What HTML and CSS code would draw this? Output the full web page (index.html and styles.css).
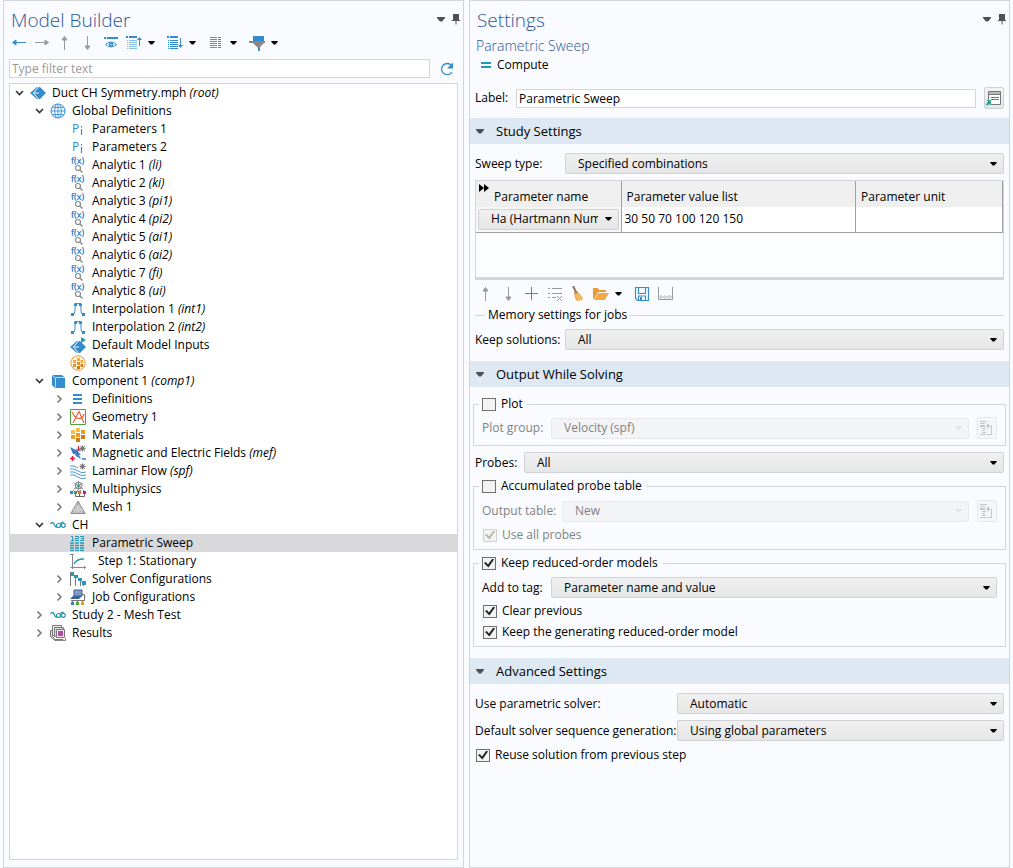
FILE: index.html
```html
<!DOCTYPE html>
<html lang="en">
<head>
<meta charset="utf-8">
<title>Model Builder</title>
<meta name="viewport" content="width=device-width, initial-scale=1">
<link rel="stylesheet" href="styles.css">
</head>
<body>
<svg class="sprite" aria-hidden="true">
  <symbol id="caret" viewBox="0 0 8 5"><path d="M0 0h8v1L5 4.500H3L0 1z"/></symbol>
  <symbol id="pin" viewBox="0 0 8 11"><path d="M1 0h6v6h1v1H4.500v3.500h-1V7H0V6h1z"/></symbol>
  <symbol id="open" viewBox="0 0 10 10"><path d="M1 3L4.500 6.500 8 3" fill="none" stroke="#333" stroke-width="1.600"/></symbol>
  <symbol id="closed" viewBox="0 0 10 10"><path d="M2.500 1.500L6 5 2.500 8.500" fill="none" stroke="#777" stroke-width="1.500"/></symbol>
  <symbol id="left" viewBox="0 0 16 16"><path d="M2 7.500h13M5 5v5L1.500 7.500z" fill="#338ccd" stroke="#338ccd"/></symbol>
  <symbol id="right" viewBox="0 0 16 16"><path d="M1 7.500h13M11 5v5l3.500-2.500z" fill="#999" stroke="#999"/></symbol>
  <symbol id="up" viewBox="0 0 16 16"><path d="M7.500 2v13M5 5h5L7.500 1.500z" fill="#999" stroke="#999"/></symbol>
  <symbol id="down" viewBox="0 0 16 16"><path d="M7.500 1v13M5 11h5l-2.500 3.500z" fill="#999" stroke="#999"/></symbol>
  <symbol id="show" viewBox="0 0 16 16"><path d="M1 3h2M4 3h11" stroke="#338ccd" stroke-width="2"/><path d="M2.500 9.500Q8 4.500 13.500 9.500Q8 14.500 2.500 9.500z" fill="none" stroke="#338ccd"/><circle cx="8" cy="9.500" r="2.300" fill="#338ccd"/><circle cx="8" cy="9.500" r=".7" fill="#fff"/></symbol>
  <symbol id="collapse" viewBox="0 0 16 16"><path d="M0 2h2M3 2h8" stroke="#338ccd" stroke-width="2"/><path d="M1 5.500h1M3 5.500h8M1 7.500h1M3 7.500h8M1 9.500h1M3 9.500h8M1 11.500h1M3 11.500h8M1 13.500h1M3 13.500h8" stroke="#8abfe5"/><path d="M13.500 4v7" stroke="#338ccd"/><path d="M11 5l2.500-3L16 5z" fill="#338ccd"/></symbol>
  <symbol id="expand" viewBox="0 0 16 16"><path d="M0 2h2M3 2h8" stroke="#338ccd" stroke-width="2"/><path d="M1 5.500h1M3 5.500h8M1 7.500h1M3 7.500h8M1 9.500h1M3 9.500h8M1 11.500h1M3 11.500h8M1 13.500h1M3 13.500h8" stroke="#338ccd"/><path d="M13.500 3v8" stroke="#338ccd"/><path d="M11 10l2.500 3 2.500-3z" fill="#338ccd"/></symbol>
  <symbol id="columns" viewBox="0 0 16 16"><path d="M2 2.500h7M2 4.500h7M2 6.500h7M2 8.500h7M2 10.500h7M2 12.500h7" stroke="#888"/><path d="M10 2.500h3M10 4.500h3M10 6.500h3M10 8.500h3M10 10.500h3M10 12.500h3" stroke="#338ccd"/></symbol>
  <symbol id="filter" viewBox="0 0 16 16"><path d="M4 1h11v5H4z" fill="#338ccd"/><path d="M0 6h16v2h-1l-4 4H8L4 8H0z" fill="#888"/><path d="M9 12h2v4H9z" fill="#338ccd"/></symbol>
  <symbol id="refresh" viewBox="0 0 16 16"><path d="M12.500 4.500A5.600 5.600 0 1 0 13 11" fill="none" stroke="#338ccd" stroke-width="1.300"/><path d="M14 1.500v6H8z" fill="#338ccd"/></symbol>
  <symbol id="root" viewBox="0 0 16 16"><path d="M0 8l7-6h3l6 6-6 6H7z" fill="#338ccd"/><path d="M8.500 2L3.500 8l5 6M3.500 8H9" fill="none" stroke="#fff" stroke-width=".9"/></symbol>
  <symbol id="globe" viewBox="0 0 16 16"><circle cx="8" cy="8" r="7" fill="#f0f7fd" stroke="#338ccd"/><path d="M8 1v14M1 8h14M2.500 4.500h11M2.500 11.500h11M6 1.500Q3 8 6 14.500M10 1.500Q13 8 10 14.500" fill="none" stroke="#338ccd" stroke-width=".8"/></symbol>
  <symbol id="param" viewBox="0 0 16 16"><text x="2" y="12" font-size="12" fill="#338ccd">P</text><path d="M11.500 8v6M11.500 5v1.500" stroke="#338ccd" stroke-width="1.200"/></symbol>
  <symbol id="fx" viewBox="0 0 16 16"><text x="1" y="7" font-size="9" fill="#1272bd" stroke="#1272bd" stroke-width=".2">f(x)</text><circle cx="8" cy="11" r="2.500" fill="#fff" stroke="#888" stroke-width="1.200"/><path d="M10 13l2.500 2.500" stroke="#888" stroke-width="1.400"/></symbol>
  <symbol id="interp" viewBox="0 0 16 16"><path d="M2 13.500h1Q5 13.500 5 9.500V6Q5 2.500 8 2.500T11 6v3.500Q11 13.500 13 13.500h1" fill="none" stroke="#338ccd"/><path d="M1 12h3v3H1zM5 2h2v3H4V3zM9 2h2l1 1v2H9zM12 12h3v3h-3z" fill="#338ccd"/></symbol>
  <symbol id="inputs" viewBox="0 0 16 16"><path d="M0 10l7-6h3l6 6-6 6H7z" fill="#338ccd"/><path d="M8.500 4l-5 6 5 6M3.500 10H9" fill="none" stroke="#fff" stroke-width=".9"/><path d="M11 0l5 3-5 3z" fill="#1f9fa8"/></symbol>
  <symbol id="matglobe" viewBox="0 0 16 16"><circle cx="8" cy="8" r="7.200" fill="#fff8ee" stroke="#f0962c"/><path d="M3 5h3v3H3zM7 3h3v3H7zM10.500 5h2.500v3h-2.500z" fill="#f5a83a"/><path d="M3 9h3v3H3zM7 7h3v3H7z" fill="#ef8f1f"/><path d="M7 11h3v3H7zM10.500 9h2.500v3h-2.500z" fill="#cf7715"/></symbol>
  <symbol id="cube" viewBox="0 0 16 16"><path d="M2 2h10l3 3v10H5l-3-3z" fill="#338ccd"/><path d="M2 2l3.500 3v9.500M5.500 4.500H15" fill="none" stroke="#cfe6f6" stroke-width=".9"/></symbol>
  <symbol id="defs" viewBox="0 0 16 16"><path d="M3 4h9M3 8h9M3 12h9" stroke="#338ccd" stroke-width="2"/></symbol>
  <symbol id="geom" viewBox="0 0 16 16"><path d="M.5.500h15v15H.5z" fill="#fff" stroke="#4aa33d"/><path d="M3 14L9 2.500 14 14M2 3q3 6.500 7 6.500T14 5" fill="none" stroke="#ea6442" stroke-width="1.200"/></symbol>
  <symbol id="mat" viewBox="0 0 16 16"><path d="M1 3h4v4H1zM6 1h4v4H6z" fill="#f9bd42"/><path d="M11 3h4v4h-4zM1 8h4v4H1zM6 6h4v4H6z" fill="#f39c1f"/><path d="M6 11h4v4H6zM11 8h4v4h-4z" fill="#d27b17"/></symbol>
  <symbol id="gear" viewBox="0 0 8 8"><path d="M4 .5v7M.5 4h7M1.500 1.500l5 5M6.500 1.500l-5 5" stroke="#777" stroke-width="1.200"/><circle cx="4" cy="4" r="1.300" fill="#777"/></symbol>
  <symbol id="mef" viewBox="0 0 16 16"><path d="M0 2l6 3 1-2 2 5 2 1-2 1 2 4-5-3-1-2-2 0z" fill="#3b7fc0"/><path d="M8.500 1v4h2" fill="none" stroke="#d11f48" stroke-width="1.300"/><path d="M0 13.500h5M2.500 11v5" stroke="#d11f48" stroke-width="1.500"/><path d="M12 14h4" stroke="#3b7fc0" stroke-width="1.500"/><use href="#gear" x="9" y="0" width="7" height="7"/></symbol>
  <symbol id="flow" viewBox="0 0 16 16"><path d="M0 3q4-1 8 2M0 6q4-1 8 2t8 1M0 9q4-1 8 2t8 1M0 12q4-1 8 2t8 1" fill="none" stroke="#4a9bd3"/><use href="#gear" x="9" y="0" width="7" height="7"/></symbol>
  <symbol id="multi" viewBox="0 0 16 16"><circle cx="8.500" cy="4.500" r="3.500" fill="#dbe7e6" stroke="#888"/><path d="M4 2l9 6M13 2L4 8M8.500 0v9" stroke="#888"/><circle cx="8.500" cy="4.500" r="1.200" fill="#24a38e"/><path d="M4 9l-2 2M8 9l-1 2M10 9l1 2M13 9l2 2" stroke="#777"/><path d="M0 10h3v3H0z" fill="#3b7fc0"/><path d="M4 10h3v3H4z" fill="#40a044"/><path d="M8 10h3v3H8z" fill="#e8663c"/><path d="M13 10h3v3h-3z" fill="#d8128d"/><path d="M5.500 13v2.500h9V13M9.500 13v2.500" fill="none" stroke="#666"/></symbol>
  <symbol id="mesh" viewBox="0 0 16 16"><path d="M8 2L.8 14.500h14.400z" fill="#bbb" stroke="#8a8a8a"/><path d="M5.500 6.500L8 8l2.500-1.500M3 11l5-3 5 3M8 8v3l-3 3.500M8 11l3 3.500M3 11h10" fill="none" stroke="#e4e4e4" stroke-width=".6"/></symbol>
  <symbol id="study" viewBox="0 0 16 16"><path d="M.5 7Q2.500 4 4 7q1.500 4 3.500 3" fill="none" stroke="#2399b6" stroke-width="1.300"/><circle cx="8.500" cy="8.500" r="2" fill="none" stroke="#2399b6" stroke-width="1.200"/><path d="M10 7q2-3 3.500-1" fill="none" stroke="#2399b6" stroke-width="1.200"/><circle cx="13.300" cy="8.300" r="2" fill="none" stroke="#2399b6" stroke-width="1.200"/></symbol>
  <symbol id="sweep" viewBox="0 0 16 16"><path d="M1 1.500h1.500v4M1 5.500h3M5 1.500h3.500v2h-3v2H9M10 1.500h3.500v4H10M11 3.500h2" fill="none" stroke="#2399b6"/><path d="M0 8h4M5 8h4M10 8h4M0 10.500h4M5 10.500h4M10 10.500h4M0 13h4M5 13h4M10 13h4M0 15.500h4M5 15.500h4M10 15.500h4" stroke="#2399b6" stroke-width="1.500"/></symbol>
  <symbol id="step" viewBox="0 0 16 16"><path d="M2.500 1v13.500H16M0 1.500h4M14.500 13v3M.5 14.500H2M2.500 14v2" fill="none" stroke="#888"/><path d="M4 11q2-5 10-5" fill="none" stroke="#2399b6" stroke-width="1.300"/></symbol>
  <symbol id="solver" viewBox="0 0 16 16"><path d="M.5 1v14M5.500 6v9M10.500 9v6M13.500 11v4" stroke="#777"/><path d="M1 1h3v4H1zM4 4h4v3H4zM8 7h4v3H8zM12 10h4v4h-4z" fill="#2399b6"/></symbol>
  <symbol id="job" viewBox="0 0 16 16"><path d="M4 1h8v6H4z" fill="#7f9fca" stroke="#3e5f93"/><path d="M3 7h9l-3 3H0z" fill="#3e6298"/><path d="M12 5.500h2.500V11M1 11.500h14M2.500 11v2M7.500 11v2M12.500 11v2" fill="none" stroke="#777"/><path d="M1 13h3v3H1z" fill="#3b7fc0"/><path d="M6 13h3v3H6z" fill="#55a733"/><path d="M11 13h3v3h-3z" fill="#f09a1d"/></symbol>
  <symbol id="results" viewBox="0 0 16 16"><path d="M2.500.500h9v10h-9z" fill="#eee" stroke="#777"/><path d="M.5 5.500h2v6L5 14.500h8v1H5l-4.500-4z" fill="#ddd" stroke="#777"/><path d="M4.500 2.500h9v9h-9z" fill="#ddd" stroke="#777"/><path d="M6.500 4.500h8v8h-8z" fill="#f4e6f2" stroke="#777"/><path d="M8 6h5v5H8z" fill="#b44a9c"/><path d="M6 15.500h9.500V13" fill="none" stroke="#888"/></symbol>
  <symbol id="compute" viewBox="0 0 10 6"><path d="M0 1h10M0 5h10" stroke="#2399b6" stroke-width="2"/></symbol>
  <symbol id="goto" viewBox="0 0 16 16"><path d="M2.500 1.500h12v13h-12z" fill="#fff" stroke="#777"/><path d="M3 2h11v2H3z" fill="#bbb"/><path d="M2 4.500h13" stroke="#777"/><path d="M5 7.500h8M5 9.500h8" stroke="#16a390"/><path d="M0 10h5v5H4l-1-1-2 2-1-1v-1l2-2z" fill="#16a390" stroke="#fff" stroke-width=".3"/></symbol>
  <symbol id="plus" viewBox="0 0 16 16"><path d="M1 7.500h13M7.500 1v13" stroke="#338ccd"/></symbol>
  <symbol id="clear" viewBox="0 0 16 16"><path d="M1 2.500h2M5 2.500h10M1 7.500h2M5 7.500h10M1 11.500h2M5 11.500h4" stroke="#999"/><path d="M10 10l5 5M15 10l-5 5" stroke="#999"/></symbol>
  <symbol id="broom" viewBox="0 0 16 16"><path d="M3 0l4 8" stroke="#8a7960" stroke-width="2"/><path d="M4 7l4-1 5 6-1 2-5 1-2-3z" fill="#f2a947"/><path d="M4 7l4-1" stroke="#b77b28"/><path d="M6 9l3 5M8 8l3 5" stroke="#f9cf8e"/></symbol>
  <symbol id="folder" viewBox="0 0 16 16"><path d="M0 2h5l1 2h7v2H5L1 13H0z" fill="#eb9a33"/><path d="M5 7h11l-4 7H1z" fill="#f2a947"/></symbol>
  <symbol id="disk" viewBox="0 0 16 16"><path d="M1.500 1.500h13v13h-11l-2-2zM4.500 1.500v6h7v-6M4.500 14v-4h7v4" fill="none" stroke="#338ccd" stroke-width="1.200"/><path d="M6 11h2v3H6z" fill="#338ccd"/></symbol>
  <symbol id="range" viewBox="0 0 16 16"><path d="M1.500 1v12.500h14V1" fill="none" stroke="#999"/><path d="M2 11.500l2-2 2 2 2-2 2 2 2-2 3 2M4 11v2M8 11v2M12 11v2" fill="none" stroke="#999" stroke-width=".8"/></symbol>
  <symbol id="source" viewBox="0 0 16 16"><path d="M1 1.500h7M1 3.500h5M3 8.500h4M3 10.500h3M3 12.500h4M1 14.500h6" stroke="#c4c6ca"/><path d="M1 6h5" stroke="#c4c6ca" stroke-width="2"/><path d="M8 6h4.500v8.500H8" fill="none" stroke="#c4c6ca"/><path d="M10 3v6L7 6z" fill="#c4c6ca"/></symbol>
  <symbol id="expander" viewBox="0 0 10 8"><path d="M0 0v8l5-4zM5 0v8l5-4z"/></symbol>
</svg>

<main class="app">
  <section class="panel builder">
    <header class="panel-head">
      <h1 class="title">Model Builder</h1>
      <div class="window-tools">
        <button class="bare" aria-label="Panel menu"><svg class="caret dim"><use href="#caret"/></svg></button>
        <button class="bare" aria-label="Pin"><svg class="pin dim"><use href="#pin"/></svg></button>
      </div>
    </header>
    <div class="toolbar">
      <button class="bare" aria-label="Previous node"><svg class="icon"><use href="#left"/></svg></button>
      <button class="bare" aria-label="Next node"><svg class="icon"><use href="#right"/></svg></button>
      <button class="bare" aria-label="Move up"><svg class="icon"><use href="#up"/></svg></button>
      <button class="bare" aria-label="Move down"><svg class="icon"><use href="#down"/></svg></button>
      <button class="bare" aria-label="Show"><svg class="icon"><use href="#show"/></svg></button>
      <button class="bare drop" aria-label="Collapse all"><svg class="icon"><use href="#collapse"/></svg><svg class="caret small"><use href="#caret"/></svg></button>
      <button class="bare drop" aria-label="Expand all"><svg class="icon"><use href="#expand"/></svg><svg class="caret small"><use href="#caret"/></svg></button>
      <button class="bare drop" aria-label="Columns"><svg class="icon"><use href="#columns"/></svg><svg class="caret small"><use href="#caret"/></svg></button>
      <button class="bare drop" aria-label="Filter"><svg class="icon"><use href="#filter"/></svg><svg class="caret small"><use href="#caret"/></svg></button>
    </div>
    <div class="filter-row">
      <input class="text-input" type="text" placeholder="Type filter text" aria-label="Filter">
      <button class="bare" aria-label="Refresh"><svg class="icon"><use href="#refresh"/></svg></button>
    </div>
    <ul class="tree" role="tree">
      <li class="node" role="treeitem"><button class="bare twisty" aria-label="Collapse"><svg><use href="#open"/></svg></button><svg class="icon"><use href="#root"/></svg><span>Duct CH Symmetry.mph <i>(root)</i></span></li>
      <li class="node l1" role="treeitem"><button class="bare twisty" aria-label="Collapse"><svg><use href="#open"/></svg></button><svg class="icon"><use href="#globe"/></svg><span>Global Definitions</span></li>
      <li class="node l2 leaf" role="treeitem"><svg class="icon"><use href="#param"/></svg><span>Parameters 1</span></li>
      <li class="node l2 leaf" role="treeitem"><svg class="icon"><use href="#param"/></svg><span>Parameters 2</span></li>
      <li class="node l2 leaf" role="treeitem"><svg class="icon"><use href="#fx"/></svg><span>Analytic 1 <i>(li)</i></span></li>
      <li class="node l2 leaf" role="treeitem"><svg class="icon"><use href="#fx"/></svg><span>Analytic 2 <i>(ki)</i></span></li>
      <li class="node l2 leaf" role="treeitem"><svg class="icon"><use href="#fx"/></svg><span>Analytic 3 <i>(pi1)</i></span></li>
      <li class="node l2 leaf" role="treeitem"><svg class="icon"><use href="#fx"/></svg><span>Analytic 4 <i>(pi2)</i></span></li>
      <li class="node l2 leaf" role="treeitem"><svg class="icon"><use href="#fx"/></svg><span>Analytic 5 <i>(ai1)</i></span></li>
      <li class="node l2 leaf" role="treeitem"><svg class="icon"><use href="#fx"/></svg><span>Analytic 6 <i>(ai2)</i></span></li>
      <li class="node l2 leaf" role="treeitem"><svg class="icon"><use href="#fx"/></svg><span>Analytic 7 <i>(fi)</i></span></li>
      <li class="node l2 leaf" role="treeitem"><svg class="icon"><use href="#fx"/></svg><span>Analytic 8 <i>(ui)</i></span></li>
      <li class="node l2 leaf" role="treeitem"><svg class="icon"><use href="#interp"/></svg><span>Interpolation 1 <i>(int1)</i></span></li>
      <li class="node l2 leaf" role="treeitem"><svg class="icon"><use href="#interp"/></svg><span>Interpolation 2 <i>(int2)</i></span></li>
      <li class="node l2 leaf" role="treeitem"><svg class="icon"><use href="#inputs"/></svg><span>Default Model Inputs</span></li>
      <li class="node l2 leaf" role="treeitem"><svg class="icon"><use href="#matglobe"/></svg><span>Materials</span></li>
      <li class="node l1" role="treeitem"><button class="bare twisty" aria-label="Collapse"><svg><use href="#open"/></svg></button><svg class="icon"><use href="#cube"/></svg><span>Component 1 <i>(comp1)</i></span></li>
      <li class="node l2" role="treeitem"><button class="bare twisty" aria-label="Expand"><svg><use href="#closed"/></svg></button><svg class="icon"><use href="#defs"/></svg><span>Definitions</span></li>
      <li class="node l2" role="treeitem"><button class="bare twisty" aria-label="Expand"><svg><use href="#closed"/></svg></button><svg class="icon"><use href="#geom"/></svg><span>Geometry 1</span></li>
      <li class="node l2" role="treeitem"><button class="bare twisty" aria-label="Expand"><svg><use href="#closed"/></svg></button><svg class="icon"><use href="#mat"/></svg><span>Materials</span></li>
      <li class="node l2" role="treeitem"><button class="bare twisty" aria-label="Expand"><svg><use href="#closed"/></svg></button><svg class="icon"><use href="#mef"/></svg><span>Magnetic and Electric Fields <i>(mef)</i></span></li>
      <li class="node l2" role="treeitem"><button class="bare twisty" aria-label="Expand"><svg><use href="#closed"/></svg></button><svg class="icon"><use href="#flow"/></svg><span>Laminar Flow <i>(spf)</i></span></li>
      <li class="node l2" role="treeitem"><button class="bare twisty" aria-label="Expand"><svg><use href="#closed"/></svg></button><svg class="icon"><use href="#multi"/></svg><span>Multiphysics</span></li>
      <li class="node l2" role="treeitem"><button class="bare twisty" aria-label="Expand"><svg><use href="#closed"/></svg></button><svg class="icon"><use href="#mesh"/></svg><span>Mesh 1</span></li>
      <li class="node l1" role="treeitem"><button class="bare twisty" aria-label="Collapse"><svg><use href="#open"/></svg></button><svg class="icon"><use href="#study"/></svg><span>CH</span></li>
      <li class="node l2 leaf selected" role="treeitem" aria-selected="true"><svg class="icon"><use href="#sweep"/></svg><span>Parametric Sweep</span></li>
      <li class="node l2 leaf step" role="treeitem"><svg class="icon"><use href="#step"/></svg><span>Step 1: Stationary</span></li>
      <li class="node l2" role="treeitem"><button class="bare twisty" aria-label="Expand"><svg><use href="#closed"/></svg></button><svg class="icon"><use href="#solver"/></svg><span>Solver Configurations</span></li>
      <li class="node l2" role="treeitem"><button class="bare twisty" aria-label="Expand"><svg><use href="#closed"/></svg></button><svg class="icon"><use href="#job"/></svg><span>Job Configurations</span></li>
      <li class="node l1" role="treeitem"><button class="bare twisty" aria-label="Expand"><svg><use href="#closed"/></svg></button><svg class="icon"><use href="#study"/></svg><span>Study 2 - Mesh Test</span></li>
      <li class="node l1" role="treeitem"><button class="bare twisty" aria-label="Expand"><svg><use href="#closed"/></svg></button><svg class="icon"><use href="#results"/></svg><span>Results</span></li>
    </ul>
  </section>

  <section class="panel settings">
    <header class="panel-head">
      <h1 class="title">Settings</h1>
      <div class="window-tools">
        <button class="bare" aria-label="Panel menu"><svg class="caret dim"><use href="#caret"/></svg></button>
        <button class="bare" aria-label="Pin"><svg class="pin dim"><use href="#pin"/></svg></button>
      </div>
    </header>
    <p class="subtitle">Parametric Sweep</p>
    <button class="bare compute"><svg><use href="#compute"/></svg>Compute</button>
    <div class="row label-row">
      <label for="label">Label:</label>
      <input class="text-input" id="label" type="text" value="Parametric Sweep">
      <button class="square" aria-label="Go to source"><svg class="icon"><use href="#goto"/></svg></button>
    </div>

    <h2 class="section-head"><svg class="caret dim"><use href="#caret"/></svg>Study Settings</h2>
    <div class="section">
      <div class="row sweep-type">
        <label for="sweep">Sweep type:</label>
        <div class="combo"><select id="sweep"><option>Specified combinations</option></select><svg class="caret small"><use href="#caret"/></svg></div>
      </div>
      <div class="table-box">
        <table class="params">
          <colgroup><col class="c-name"><col class="c-list"><col class="c-unit"></colgroup>
          <thead><tr><th class="first"><svg class="expander"><use href="#expander"/></svg>Parameter name</th><th>Parameter value list</th><th>Parameter unit</th></tr></thead>
          <tbody><tr>
            <td class="name-cell"><div class="combo"><select aria-label="Parameter name"><option>Ha (Hartmann Num</option></select><svg class="caret small"><use href="#caret"/></svg></div></td>
            <td>30 50 70 100 120 150</td>
            <td></td>
          </tr></tbody>
        </table>
      </div>
      <div class="toolbar table-tools">
        <button class="bare" aria-label="Move up"><svg class="icon"><use href="#up"/></svg></button>
        <button class="bare" aria-label="Move down"><svg class="icon"><use href="#down"/></svg></button>
        <button class="bare" aria-label="Add"><svg class="icon"><use href="#plus"/></svg></button>
        <button class="bare" aria-label="Delete"><svg class="icon"><use href="#clear"/></svg></button>
        <button class="bare" aria-label="Clear table"><svg class="icon"><use href="#broom"/></svg></button>
        <button class="bare drop" aria-label="Load from file"><svg class="icon"><use href="#folder"/></svg><svg class="caret small"><use href="#caret"/></svg></button>
        <button class="bare" aria-label="Save to file"><svg class="icon"><use href="#disk"/></svg></button>
        <button class="bare" aria-label="Range"><svg class="icon"><use href="#range"/></svg></button>
      </div>
      <h3 class="divider">Memory settings for jobs</h3>
      <div class="row keep-row">
        <label for="keep">Keep solutions:</label>
        <div class="combo"><select id="keep"><option>All</option></select><svg class="caret small"><use href="#caret"/></svg></div>
      </div>
    </div>

    <h2 class="section-head"><svg class="caret dim"><use href="#caret"/></svg>Output While Solving</h2>
    <div class="section output">
      <fieldset class="group plot">
        <legend><label class="check"><input type="checkbox">Plot</label></legend>
        <div class="row off">
          <label class="tag-label" for="plotgroup">Plot group:</label>
          <div class="combo"><select id="plotgroup" disabled><option>Velocity (spf)</option></select><svg class="caret small"><use href="#caret"/></svg></div>
          <button class="square" disabled aria-label="Go to plot group"><svg class="icon"><use href="#source"/></svg></button>
        </div>
      </fieldset>
      <div class="row probes">
        <label for="probes">Probes:</label>
        <div class="combo"><select id="probes"><option>All</option></select><svg class="caret small"><use href="#caret"/></svg></div>
      </div>
      <fieldset class="group table-group">
        <legend><label class="check"><input type="checkbox">Accumulated probe table</label></legend>
        <div class="row off">
          <label class="table-label" for="outtable">Output table:</label>
          <div class="combo"><select id="outtable" disabled><option>New</option></select><svg class="caret small"><use href="#caret"/></svg></div>
          <button class="square" disabled aria-label="Go to table"><svg class="icon"><use href="#source"/></svg></button>
        </div>
        <label class="check off inset"><input type="checkbox" checked disabled>Use all probes</label>
      </fieldset>
      <fieldset class="group rom">
        <legend><label class="check"><input type="checkbox" checked>Keep reduced-order models</label></legend>
        <div class="row">
          <label class="tag-label" for="tag">Add to tag:</label>
          <div class="combo"><select id="tag"><option>Parameter name and value</option></select><svg class="caret small"><use href="#caret"/></svg></div>
        </div>
        <label class="check inset"><input type="checkbox" checked>Clear previous</label>
        <label class="check inset"><input type="checkbox" checked>Keep the generating reduced-order model</label>
      </fieldset>
    </div>

    <h2 class="section-head"><svg class="caret dim"><use href="#caret"/></svg>Advanced Settings</h2>
    <div class="section advanced">
      <div class="row">
        <label for="solver-mode">Use parametric solver:</label>
        <div class="combo"><select id="solver-mode"><option>Automatic</option></select><svg class="caret small"><use href="#caret"/></svg></div>
      </div>
      <div class="row">
        <label for="sequence">Default solver sequence generation:</label>
        <div class="combo"><select id="sequence"><option>Using global parameters</option></select><svg class="caret small"><use href="#caret"/></svg></div>
      </div>
      <label class="check reuse"><input type="checkbox" checked>Reuse solution from previous step</label>
    </div>
  </section>
</main>
</body>
</html>
```
FILE: styles.css
```css
* { box-sizing: border-box; }

body {
  margin: 0;
  background: #fafbff;
  color: #000;
  font: 12px/16px "Open Sans", "Noto Sans", sans-serif;
}

.sprite { display: none; }
svg { display: block; flex: none; }
.icon { width: 16px; height: 16px; }
.caret { width: 8px; height: 5px; }
.caret.small { width: 7px; height: 4px; }
.pin { width: 8px; height: 11px; }
.dim { fill: #505050; }

button, input, select { font: inherit; color: inherit; margin: 0; }

.bare { display: flex; align-items: center; padding: 0; border: 0; background: none; }

.app {
  display: grid;
  grid-template-columns: 461fr 541fr;
  gap: 5px;
  min-height: 100vh;
  padding: 0 3px;
}

.panel {
  display: flex;
  flex-direction: column;
  min-width: 0;
  border: 1px solid #d3d5d8;
}

.panel-head {
  display: flex;
  justify-content: space-between;
  height: 34px;
  padding: 5px 3px 0 7px;
}

.title { margin: 0; color: #2b579a; font-size: 19px; line-height: 28px; font-weight: 300; }
.window-tools { display: flex; align-items: center; gap: 7px; height: 26px; }

.toolbar { display: flex; align-items: center; gap: 7px; height: 16px; }
.drop { gap: 6px; }

.builder .toolbar { padding-left: 7px; }
.builder .drop { margin-right: 5px; }

.filter-row { display: flex; align-items: center; gap: 9px; padding: 8px 8px 0 5px; }
.text-input {
  flex: 1;
  min-width: 0;
  height: 19px;
  padding: 0 2px;
  border: 1px solid #d3d5d8;
  border-radius: 0;
  background: #fff;
}
.text-input::placeholder { color: #999; opacity: 1; }

.tree {
  flex: 1;
  margin: 5px 5px 7px;
  padding: 0;
  border: 1px solid #d3d5d8;
  background: #fff;
  list-style: none;
}
.node { display: flex; align-items: center; height: 18px; white-space: nowrap; }
.node .icon { margin-right: 6px; }
.twisty { justify-content: center; width: 20px; height: 18px; }
.twisty svg { width: 10px; height: 10px; }
.l1 { padding-left: 20px; }
.l2 { padding-left: 40px; }
.leaf { padding-left: 60px; }
.step .icon { margin-right: 12px; }
.selected { background: #d9d9db; }

.subtitle { margin: 0; padding-left: 6px; color: #2b579a; font-size: 14px; line-height: 22px; font-weight: 300; }
.compute { align-self: flex-start; gap: 6px; height: 16px; margin-left: 11px; }
.compute svg { width: 10px; height: 6px; }

.row { display: flex; align-items: center; gap: 8px; }
.row > label { flex: none; white-space: nowrap; }
.label-row { padding: 14px 5px 9px; }
.label-row label { width: 33px; }

.square {
  display: grid;
  place-items: center;
  width: 20px;
  height: 22px;
  padding: 0;
  border: 1px solid #d0d2d5;
  border-radius: 2px;
  background: linear-gradient(#f4f4f5, #e6e6e6);
}
.square:disabled { border-color: #e6e8eb; background: #f5f6f8; }

.section-head {
  display: flex;
  align-items: center;
  gap: 12px;
  height: 26px;
  margin: 0;
  padding-left: 6px;
  background: #dde8f3;
  font-size: 13px;
  line-height: 18px;
  font-weight: 400;
}

.section { padding: 9px 5px 11px; }

.combo { display: grid; flex: 1; align-items: center; min-width: 0; }
.combo > * { grid-area: 1 / 1; }
.combo > svg { justify-self: end; margin-right: 7px; pointer-events: none; }
.combo select {
  appearance: none;
  width: 100%;
  height: 21px;
  padding: 0 20px 0 12px;
  border: 1px solid #d0d2d5;
  border-radius: 2px;
  background: linear-gradient(#f0f0f1, #e6e6e6);
}
.off { color: #808285; }
.combo select:disabled { color: #808285; border-color: #e6e8eb; background: #f3f4f6; opacity: 1; }
.combo select:disabled + svg { fill: #e2e4e8; }

.sweep-type > label, .keep-row > label { width: 82px; }

.table-box {
  min-height: 100px;
  margin-top: 6px;
  border: 1px solid #d3d5d8;
  border-bottom-width: 3px;
  background: #fcfdff;
}
.params { width: 100%; table-layout: fixed; border-collapse: collapse; }
.c-name { width: 145px; }
.c-unit { width: 147px; }
.params th {
  height: 26px;
  padding: 5px 6px 0 5px;
  border-right: 1px solid #a0a0a0;
  background: #efefef;
  font-weight: 400;
  text-align: left;
}
.params th.first { position: relative; padding-left: 18px; }
.expander { position: absolute; left: 3px; top: 3px; width: 10px; height: 8px; }
.params td {
  height: 25px;
  padding: 0 3px;
  border-right: 1px solid #a0a0a0;
  border-bottom: 1px solid #a0a0a0;
  background: #fff;
}
.params .name-cell { padding: 0 2px; background: #f7f7f8; }

.table-tools { margin-top: 6px; padding-left: 3px; }
.table-tools .drop { margin-right: 5px; }

.divider {
  display: flex;
  align-items: center;
  gap: 3px;
  margin: 5px 0 6px;
  font-size: 12px;
  line-height: 16px;
  font-weight: 400;
}
.divider::before, .divider::after { content: ""; width: 10px; height: 1px; background: #d3d5d8; }
.divider::after { flex: 1; }

.check { display: flex; align-items: center; gap: 5px; width: max-content; }
.check input {
  appearance: none;
  display: grid;
  place-items: center;
  width: 14px;
  height: 13px;
  border: 1px solid #707070;
  background: #f3f3f1;
}
.check input:checked::before {
  content: "";
  width: 10px;
  height: 9px;
  background: #222;
  clip-path: polygon(0 50%, 18% 38%, 40% 66%, 84% 0, 100% 10%, 44% 100%);
}
.check input:disabled { border-color: #cfd1d4; }
.check input:disabled::before { background: #b5b5b5; }

.group {
  min-width: 0;
  margin: 0 -2px;
  padding: 0 8px 6px;
  border: 1px solid #d3d5d8;
}
.group legend { margin-left: -3px; padding: 0 4px 0 3px; }
.group .row { margin-top: 6px; }
.group .inset { margin-top: 5px; margin-left: 1px; }
.tag-label { width: 61px; }
.table-label { width: 72px; }

.plot .row { margin-top: 5px; }
.probes { margin: 6px 0 5px; }
.probes > label { width: 41px; }
.rom { margin-top: 5px; }

.advanced .row { gap: 4px; margin-bottom: 6px; }
.advanced .row > label { width: 198px; }
.reuse { margin-left: 1px; }
```
